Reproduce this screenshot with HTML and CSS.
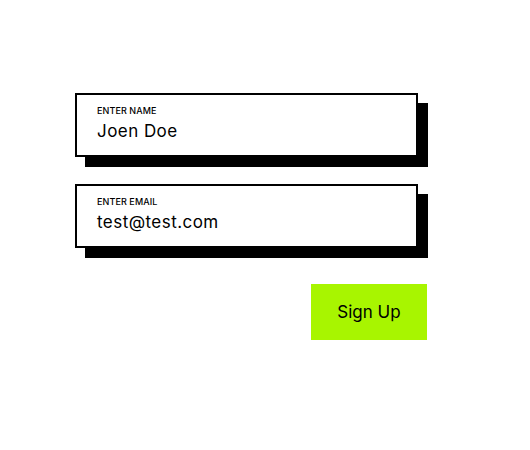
FILE: index.html
```html
<!DOCTYPE html>
<html>
<head>
<meta charset="utf-8">
<link rel="stylesheet" href="styles.css">
</head>
<body>
<form class="form">
  <label class="field">
    <span class="field-label">ENTER NAME</span>
    <span class="field-value">Joen Doe</span>
  </label>
  <label class="field">
    <span class="field-label">ENTER EMAIL</span>
    <span class="field-value">test@test.com</span>
  </label>
  <div class="actions">
    <button type="button" class="btn">Sign Up</button>
  </div>
</form>
</body>
</html>
```
FILE: styles.css
```css
html, body {
  margin: 0;
  padding: 0;
  background: #ffffff;
}
body {
  font-family: "Inter", "Noto Sans", sans-serif;
  color: #000;
}
.form {
  width: 352px;
  padding: 93px 0 0 75px;
  display: flex;
  flex-direction: column;
  gap: 27px;
}
.field {
  width: 343px;
  height: 64px;
  box-sizing: border-box;
  border: 2px solid #000;
  background: #fff;
  box-shadow: 10px 10px 0 #000;
  display: flex;
  flex-direction: column;
  padding: 10px 0 0 20px;
}
.field-label {
  font-size: 9px;
  font-weight: 500;
  letter-spacing: 0.1px;
  line-height: 12px;
}
.field-value {
  font-size: 17px;
  line-height: 22px;
  margin-top: 3px;
  letter-spacing: 0.45px;
}
.actions {
  display: flex;
  justify-content: flex-end;
  padding-top: 9px;
}
.btn {
  width: 116px;
  height: 56px;
  border: none;
  background: #a8f500;
  font-family: "Inter", "Noto Sans", sans-serif;
  font-size: 17px;
  color: #000;
  padding: 0;
}
```
